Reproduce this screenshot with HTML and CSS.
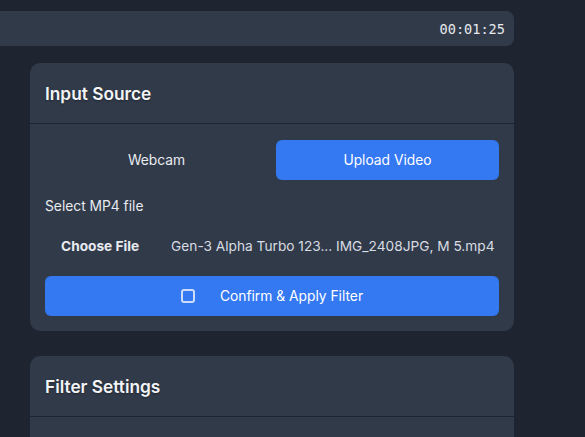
FILE: index.html
```html
<!DOCTYPE html>
<html>
<head>
<meta charset="utf-8">
<link rel="stylesheet" href="styles.css">
</head>
<body>
<div class="main">
  <div class="topbar"><span class="timer">00:01:25</span></div>

  <section class="card">
    <header class="card-head"><h2>Input Source</h2></header>
    <div class="card-body">
      <div class="tabs">
        <button class="tab">Webcam</button>
        <button class="tab active">Upload Video</button>
      </div>
      <div class="label">Select MP4 file</div>
      <div class="file-row">
        <span class="file-btn">Choose File</span>
        <span class="file-name">Gen-3 Alpha Turbo 123... IMG_2408JPG, M 5.mp4</span>
      </div>
      <button class="confirm">
        <svg class="chk" width="14" height="14" viewBox="0 0 14 14"><rect x="1" y="1" width="12" height="12" rx="2" fill="none" stroke="rgba(255,255,255,0.75)" stroke-width="2"/></svg>
        <span>Confirm &amp; Apply Filter</span>
      </button>
    </div>
  </section>

  <section class="card card2">
    <header class="card-head"><h2>Filter Settings</h2></header>
    <div class="card-body"></div>
  </section>
</div>
</body>
</html>
```

FILE: styles.css
```css
* { box-sizing: border-box; }
html, body { margin: 0; padding: 0; }
body {
  background: #1e2430;
  font-family: Inter, "Noto Sans", sans-serif;
  color: #e8ebf0;
  height: 437px;
  overflow: hidden;
}
.main {
  padding-top: 11px;
  margin-left: 30px;
  width: 484px;
}
.topbar {
  margin-left: -60px;
  height: 35px;
  background: #313a49;
  border-radius: 8px;
  display: flex;
  align-items: center;
  justify-content: flex-end;
  padding-right: 9px;
}
.timer {
  font-family: "DejaVu Sans Mono", monospace;
  font-size: 13.6px;
  color: #e6e8ec;
}
.card {
  margin-top: 17px;
  background: #313a49;
  border-radius: 10px;
}
.card2 { margin-top: 25px; height: 81px; border-radius: 10px 10px 0 0; }
.card-head {
  height: 61px;
  padding: 0 15px;
  display: flex;
  align-items: center;
  border-bottom: 1px solid #1f2631;
}
.card-head h2 {
  margin: 0;
  font-size: 17.3px;
  font-weight: 600;
  color: #f3f4f6;
  text-shadow: 0 1px 2px rgba(0,0,0,0.35);
}
.card-body {
  padding: 16px 15px 15px;
  display: flex;
  flex-direction: column;
}
.tabs {
  display: grid;
  grid-template-columns: 1fr 1fr;
  gap: 8px;
}
.tab {
  height: 40px;
  border: 0;
  border-radius: 6px;
  background: transparent;
  color: #e8ebf0;
  font-family: inherit;
  font-size: 13.8px;
}
.tab.active { background: #3478f2; color: #fff; }
.label {
  margin-top: 18px;
  font-size: 13.8px;
  line-height: 16px;
  color: #e8ebf0;
}
.file-row {
  margin-top: 17px;
  height: 30px;
  display: flex;
  align-items: center;
  gap: 16px;
  font-size: 13.7px;
}
.file-btn {
  padding: 0 16px;
  font-weight: 700;
  color: #e8ebf0;
}
.file-name { color: #d8dce3; white-space: nowrap; }
.confirm {
  margin-top: 15px;
  height: 40px;
  border: 0;
  border-radius: 6px;
  background: #3478f2;
  color: #fff;
  font-family: inherit;
  font-size: 13.8px;
  display: flex;
  align-items: center;
  justify-content: center;
  gap: 25px;
}
.chk { display: block; }
```
